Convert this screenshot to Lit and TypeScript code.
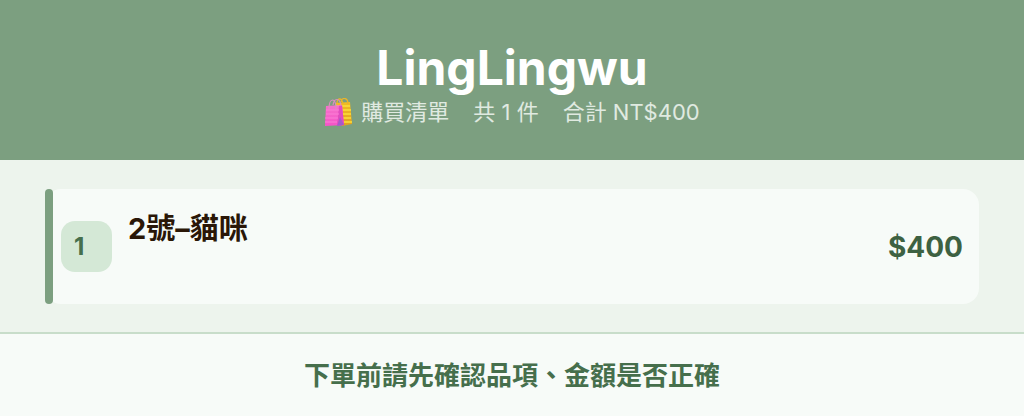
import { LitElement, html, css, svg } from "lit";
import { customElement, state } from "lit/decorators.js";

interface Item {
  name: string;
  price: number;
}

const bags = svg`
  <defs>
    <linearGradient id="pink" x1="0" y1="0" x2="0" y2="1">
      <stop offset="0" stop-color="#f573cb" />
      <stop offset="1" stop-color="#f653c8" />
    </linearGradient>
    <linearGradient id="gold" x1="0" y1="0" x2="0" y2="1">
      <stop offset="0" stop-color="#f3bd24" />
      <stop offset="1" stop-color="#e0a01f" />
    </linearGradient>
  </defs>
  <path d="M11 5 L26 4 L28 26 L18 28 Z" fill="url(#gold)" />
  <path d="M12 8H26M13 12H27M17 16H27M17 20H27M17 24H28" stroke="#fbe03a" stroke-width="1.4" />
  <path d="M13 5 C13 0 18 -1 19 6 M17 4 C18 -1 24 -1 24 6" fill="none" stroke="#e9b42a" stroke-width="1.3" />
  <path d="M2 8 L18 7 L20 27 L1 28 Z" fill="url(#pink)" />
  <path d="M15 8 L18 7 L20 27 L13 28 Z" fill="#e04cbf" />
  <path d="M16 19 L20 27 L13 28 Z" fill="#a45acb" />
  <path d="M2 12H15M2 16H15M1 20H14M1 24H13" stroke="#fb7fd6" stroke-width="1" />
  <path d="M5 11 C5 -1 12 -1 12 11 M9 7 C10 0 16 -1 17 8" fill="none" stroke="#dc8fbe" stroke-width="1.2" />
`;

@customElement("app-root")
export class AppRoot extends LitElement {
  static styles = css`
    :host {
      display: block;
      min-height: 100vh;
      background: #edf4ed;
      color: #2a1707;
      font-family: Inter, "Noto Sans CJK TC", sans-serif;
    }
    .header {
      display: flex;
      flex-direction: column;
      align-items: center;
      padding: 40px 32px 32px;
      background: #7c9f80;
    }
    .brand {
      margin: 0;
      color: #fff;
      font-size: 48px;
      font-weight: 700;
      line-height: 56px;
    }
    .summary {
      display: flex;
      align-items: center;
      gap: 8px;
      margin: 0;
      color: #e0eae1;
      font-size: 22px;
      line-height: 32px;
    }
    .bags {
      display: block;
      width: 29px;
      height: 29px;
    }
    .facts {
      display: flex;
      gap: 24px;
    }
    .list {
      display: grid;
      gap: 16px;
      margin: 0;
      padding: 29px 45px 28px;
      list-style: none;
    }
    .item {
      display: flex;
      align-items: center;
      gap: 16px;
      min-height: 115px;
      padding-right: 16px;
      box-sizing: border-box;
      border-radius: 16px;
      background: #f7fbf8;
    }
    .lead {
      display: flex;
      align-items: center;
      align-self: stretch;
      gap: 8px;
    }
    .bar {
      align-self: stretch;
      width: 8px;
      border-radius: 4px;
      background: #7c9f80;
    }
    .number {
      width: 51px;
      padding-left: 13px;
      box-sizing: border-box;
      border-radius: 14px;
      background: #d4e8d6;
      color: #466f4c;
      font-size: 24px;
      font-weight: 700;
      line-height: 51px;
    }
    .name {
      flex: 1;
      align-self: flex-start;
      margin: 0;
      padding-top: 20px;
      font-size: 29px;
      font-weight: 700;
      line-height: 40px;
    }
    .price {
      color: #3d6142;
      font-size: 28px;
      font-weight: 700;
      line-height: 40px;
    }
    .notice {
      padding: 24px 32px;
      border-top: 2px solid #c8ddca;
      background: #f7fbf8;
      color: #466f4c;
      font-size: 26px;
      font-weight: 700;
      line-height: 36px;
      text-align: center;
    }
  `;

  @state() private items: Item[] = [{ name: "2號–貓咪", price: 400 }];

  render() {
    const total = this.items.reduce((sum, item) => sum + item.price, 0);
    return html`
      <header class="header">
        <h1 class="brand">LingLingwu</h1>
        <p class="summary">
          <svg class="bags" viewBox="0 0 29 29" aria-hidden="true">${bags}</svg>
          <span class="facts">
            <span>購買清單</span>
            <span>共 ${this.items.length} 件</span>
            <span>合計 NT$${total}</span>
          </span>
        </p>
      </header>
      <ol class="list">
        ${this.items.map(
          (item, index) => html`
            <li class="item">
              <div class="lead">
                <span class="bar"></span>
                <span class="number">${index + 1}</span>
              </div>
              <h2 class="name">${item.name}</h2>
              <span class="price">$${item.price}</span>
            </li>
          `
        )}
      </ol>
      <footer class="notice">下單前請先確認品項、金額是否正確</footer>
    `;
  }
}
